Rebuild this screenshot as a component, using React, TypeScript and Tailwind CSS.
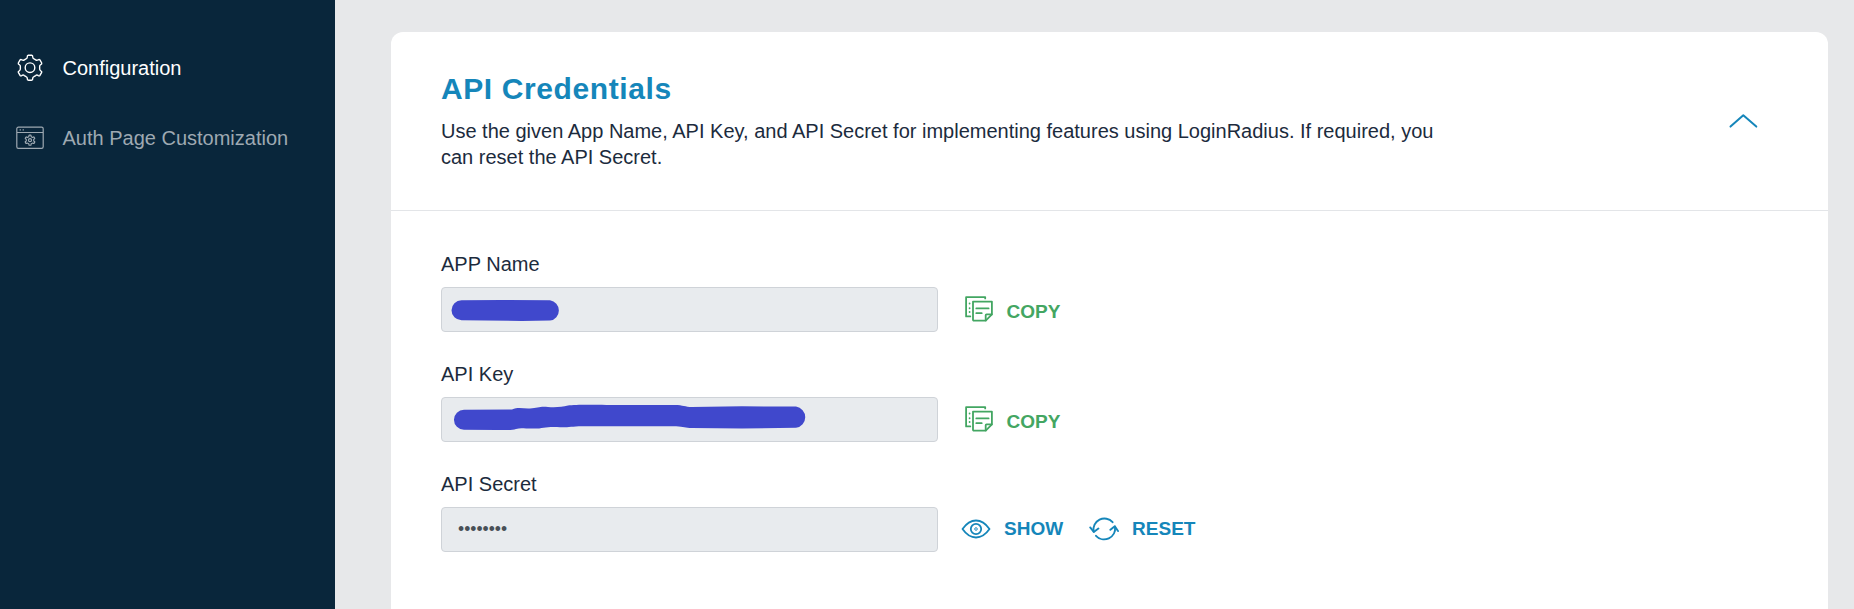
import React from "react";

function gearPath(cx: number, cy: number, outer: number, inner: number): string {
  const pt = (r: number, deg: number) => {
    const a = (deg * Math.PI) / 180;
    return `${(cx + r * Math.cos(a)).toFixed(2)} ${(cy + r * Math.sin(a)).toFixed(2)}`;
  };
  const mid = (outer + inner) / 2;
  let d = "";
  for (let i = 0; i < 6; i++) {
    const c = -90 + i * 60;
    d += `${i === 0 ? "M" : "L"}${pt(inner, c - 24)} Q${pt(inner, c - 16)} ${pt(mid, c - 14)} `;
    d += `Q${pt(outer, c - 13)} ${pt(outer, c - 8)} L${pt(outer, c + 8)} `;
    d += `Q${pt(outer, c + 13)} ${pt(mid, c + 14)} Q${pt(inner, c + 16)} ${pt(inner, c + 24)} `;
  }
  return d + "Z";
}

function GearIcon() {
  return (
    <svg width="28" height="28" viewBox="0 0 28 28" fill="none" stroke="currentColor" strokeWidth="1.4" strokeLinejoin="round">
      <path d={gearPath(14, 13.7, 12.6, 9.7)} />
      <circle cx="14" cy="13.7" r="4.8" />
    </svg>
  );
}

function WindowGearIcon() {
  return (
    <svg width="28" height="24" viewBox="0 0 28 24" fill="none" stroke="currentColor" strokeWidth="1.2">
      <rect x="0.8" y="1.2" width="26.4" height="21.2" rx="1.6" />
      <path d="M1 6.5H27M3.6 3.9h1.3M6.6 3.9h1.3" />
      <path d={gearPath(14, 14.2, 5.1, 3.7)} strokeLinejoin="round" />
      <circle cx="14" cy="14.2" r="1.5" />
    </svg>
  );
}

function CopyIcon() {
  return (
    <svg className="-mt-0.5 shrink-0" width="28" height="26" viewBox="0 0 28 26" fill="none" stroke="currentColor" strokeWidth="1.8" strokeLinejoin="round" strokeLinecap="round">
      <path d="M20.2 2.4V1.1H1.1v19.3h4.2" />
      <path d="M8 5.6h18.9v12.8l-6.2 6.2H8.8a.8.8 0 0 1-.8-.8z" />
      <path d="M26.7 18.4h-5.2a.8.8 0 0 0-.8.8v5.2M11.3 12.4h12.3M11.3 17.2h5.4" />
      <path d="M4.6 7.4v.1M4.6 12.2v.1M4.6 16v.1" />
    </svg>
  );
}

function EyeIcon() {
  return (
    <svg className="shrink-0" width="30" height="20" viewBox="0 0 30 20" fill="none" stroke="currentColor" strokeWidth="1.8" strokeLinejoin="round">
      <path d="M1.5 10C5.5 4.3 10 1.5 15 1.5S24.5 4.3 28.5 10C24.5 15.7 20 18.5 15 18.5S5.5 15.7 1.5 10Z" />
      <circle cx="15" cy="10" r="5.2" />
      <circle cx="15" cy="10" r="1.3" strokeWidth="0.9" />
    </svg>
  );
}

function ResetIcon() {
  return (
    <svg className="shrink-0" width="30" height="24" viewBox="0 0 30 24" fill="none" stroke="currentColor" strokeWidth="1.9" strokeLinejoin="round" strokeLinecap="round">
      <path d="M23.6 5.2A11 11 0 0 0 4.6 14.6" />
      <path d="M1.2 10.4l3.6 4.6 4.6-3.4" />
      <path d="M7 18.8A11 11 0 0 0 26 9.8" />
      <path d="M21.4 12.8l4.4-3.6 3.2 4.9" />
    </svg>
  );
}

function NavItem({ icon, label, active }: { icon: React.ReactNode; label: string; active?: boolean }) {
  return (
    <a className={`flex h-[70px] items-center pl-4 text-xl ${active ? "text-white" : "text-[#9ea9b2]"}`}>
      <span className="flex w-[46.5px] shrink-0">{icon}</span>
      <span className="whitespace-nowrap">{label}</span>
    </a>
  );
}

function Field({ label, value, actions }: { label: string; value: React.ReactNode; actions: React.ReactNode }) {
  return (
    <div>
      <div className="text-xl leading-[26px]">{label}</div>
      <div className="mt-[10px] flex items-center">
        <div className="flex h-[45px] w-[497px] shrink-0 items-center rounded border border-[#cfd3d8] bg-[#e8ebee]">{value}</div>
        {actions}
      </div>
    </div>
  );
}

function CopyAction() {
  return (
    <button className="ml-[27px] flex items-center text-[19px] leading-6 font-bold text-[#43a662]">
      <CopyIcon />
      <span className="mt-1 ml-[13.5px]">COPY</span>
    </button>
  );
}

export default function App() {
  return (
    <div className="flex h-[609px] w-full overflow-hidden bg-[#e7e8ea] font-['Liberation_Sans',Arial,sans-serif] text-[#1c2b3d]">
      <aside className="w-[335px] shrink-0 bg-[#09263b] pt-[33px]">
        <NavItem icon={<GearIcon />} label="Configuration" active />
        <NavItem icon={<WindowGearIcon />} label="Auth Page Customization" />
      </aside>
      <main className="flex-1 pt-8 pr-[26px] pl-14">
        <section className="h-full rounded-t-xl bg-white">
          <header className="flex h-[179px] justify-between border-b border-[#e3e5e8] pr-[70px] pl-[50px]">
            <div className="pt-[39px]">
              <h1 className="text-[30px] leading-9 font-bold tracking-[0.6px] text-[#1586ba]">API Credentials</h1>
              <p className="mt-[11px] w-[1010px] text-xl leading-[26px]">
                Use the given App Name, API Key, and API Secret for implementing features using LoginRadius. If required, you
                can reset the API Secret.
              </p>
            </div>
            <svg className="mt-[81px]" width="30" height="16" viewBox="0 0 30 16" fill="none" stroke="#1586ba" strokeWidth="2" strokeLinecap="round" strokeLinejoin="round">
              <path d="M2.5 13.6L15.3 2.3L28.3 13.6" />
            </svg>
          </header>
          <div className="flex flex-col gap-[29px] pt-10 pl-[50px]">
            <Field
              label="APP Name"
              value={
                <svg width="130" height="43" viewBox="0 0 130 43" fill="#4048cc">
                  <path d="M19.5 12.3L60 12L108 12.2A10.3 10.3 0 0 1 108 32.6L80 32.9L19.5 32.3A10 10 0 0 1 19.5 12.3Z" />
                </svg>
              }
              actions={<CopyAction />}
            />
            <Field
              label="API Key"
              value={
                <svg width="380" height="43" viewBox="0 0 380 43" fill="#4048cc">
                  <path d="M22 11.7L70 11.4C77 8.8 82 11 88 10.5C96 10 98 8 106 9C114 9.5 120 9 126 7.5C135 6 165 7 180 7L233 7C241 7 243 9 250 9L300 8.3L354 8.6A10.7 10.7 0 0 1 354 29.8L300 30.5L250 30C243 30 242 28.6 234 28.3L140 28.2C128 28.5 125 29.7 115 29C104 28.5 101 30.5 92 30.6C83 30.8 79 29.4 74 31C70 32.5 62 31.8 55 32L22 31.8A10 10 0 0 1 22 11.7Z" />
                </svg>
              }
              actions={<CopyAction />}
            />
            <Field
              label="API Secret"
              value={<span className="-mt-px ml-4 text-[17.5px] leading-5 text-[#495057]">••••••••</span>}
              actions={
                <div className="-mt-px flex items-center text-[19px] leading-6 font-bold text-[#1586ba]">
                  <button className="ml-[23px] flex items-center">
                    <EyeIcon />
                    <span className="ml-[13px]">SHOW</span>
                  </button>
                  <button className="ml-[26px] flex items-center">
                    <ResetIcon />
                    <span className="ml-[13px]">RESET</span>
                  </button>
                </div>
              }
            />
          </div>
        </section>
      </main>
    </div>
  );
}
